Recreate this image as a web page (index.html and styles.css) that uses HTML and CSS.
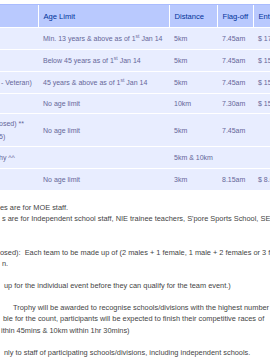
FILE: index.html
```html
<!DOCTYPE html>
<html>
<head>
<meta charset="utf-8">
<link rel="stylesheet" href="styles.css">
</head>
<body>
<div class="page">
  <table class="fees">
    <colgroup>
      <col class="c1"><col class="c2"><col class="c3"><col class="c4"><col class="c5">
    </colgroup>
    <thead>
      <tr>
        <th></th>
        <th>Age Limit</th>
        <th>Distance</th>
        <th>Flag-off</th>
        <th>Entry Fee</th>
      </tr>
    </thead>
    <tbody>
      <tr class="r1">
        <td></td>
        <td>Min. 13 years &amp; above as of 1<sup>st</sup> Jan 14</td>
        <td>5km</td>
        <td>7.45am</td>
        <td>$ 17.00</td>
      </tr>
      <tr class="r2">
        <td></td>
        <td>Below 45 years as of 1<sup>st</sup> Jan 14</td>
        <td>5km</td>
        <td>7.45am</td>
        <td>$ 15.00</td>
      </tr>
      <tr class="r3">
        <td><span class="frag f3">- Veteran)</span></td>
        <td>45 years &amp; above as of 1<sup>st</sup> Jan 14</td>
        <td>5km</td>
        <td>7.45am</td>
        <td>$ 15.00</td>
      </tr>
      <tr class="r4">
        <td></td>
        <td>No age limit</td>
        <td>10km</td>
        <td>7.30am</td>
        <td>$ 15.00</td>
      </tr>
      <tr class="r5">
        <td><span class="frag f5">osed) **<br>5)</span></td>
        <td>No age limit</td>
        <td>5km</td>
        <td>7.45am</td>
        <td></td>
      </tr>
      <tr class="r6">
        <td><span class="frag f6">hy ^^</span></td>
        <td></td>
        <td>5km &amp; 10km</td>
        <td></td>
        <td></td>
      </tr>
      <tr class="r7">
        <td></td>
        <td>No age limit</td>
        <td>3km</td>
        <td>8.15am</td>
        <td>$ 8.00</td>
      </tr>
    </tbody>
  </table>

  <div class="notes">
    <p class="l0">es are for MOE staff.</p>
    <p class="l1">s are for Independent school staff, NIE trainee teachers, S'pore Sports School, SEAB staff.</p>
    <p class="blank">&nbsp;</p>
    <p class="blank">&nbsp;</p>
    <p class="l4">osed):&nbsp; Each team to be made up of (2 males + 1 female, 1 male + 2 females or 3 females)</p>
    <p class="l5">n.</p>
    <p class="blank">&nbsp;</p>
    <p class="l7">up for the individual event before they can qualify for the team event.)</p>
    <p class="blank">&nbsp;</p>
    <p class="l9">Trophy will be awarded to recognise schools/divisions with the highest number</p>
    <p class="l10">ble for the count, participants will be expected to finish their competitive races of</p>
    <p class="l11">ithin 45mins &amp; 10km within 1hr 30mins)</p>
    <p class="blank">&nbsp;</p>
    <p class="l13">nly to staff of participating schools/divisions, including independent schools.</p>
  </div>
</div>
</body>
</html>
```
FILE: styles.css
```css
html, body {
  margin: 0;
  padding: 0;
  background: #ffffff;
}
body {
  width: 270px;
  height: 360px;
  overflow: hidden;
  font-family: "Liberation Sans", Arial, sans-serif;
}
.page {
  padding-top: 4px;
}
.fees {
  border-collapse: collapse;
  table-layout: fixed;
  width: 323px;
  text-align: left;
}
.c1 { width: 38px; }
.c2 { width: 131px; }
.c3 { width: 48px; }
.c4 { width: 36px; }
.c5 { width: 70px; }

.fees th {
  font-weight: normal;
  font-size: 7.6px;
  color: #003399;
  background: #b9c9fe;
  border-top: 1px solid #aabcfe;
  border-left: 1px solid #ffffff;
  border-bottom: 1px solid #ffffff;
  height: 22px;
  padding: 0 0 0 5px;
  white-space: nowrap;
  overflow: hidden;
}
.fees th:first-child { border-left: none; }
.fees td {
  font-size: 7px;
  color: #666699;
  background: #e8edff;
  border-bottom: 1px solid #ffffff;
  padding: 0 0 0 5px;
  height: 21px;
  white-space: nowrap;
  overflow: hidden;
  vertical-align: middle;
}
.fees td:first-child { padding-left: 0; }
.fees .r5 td { height: 32px; }
.fees .r4 td { height: 19px; }
.fees sup {
  font-size: 5px;
  line-height: 0;
  vertical-align: 3px;
}
.frag {
  display: block;
  line-height: 13px;
}
.f3 { margin-left: 1px; }
.f5 { margin-left: -1px; }
.f6 { margin-left: -1px; }

.notes {
  margin-top: 11px;
  font-size: 7.4px;
  color: #444444;
  line-height: 11.15px;
  white-space: nowrap;
}
.notes p {
  margin: 0;
  height: 11.15px;
}
.l0 { padding-left: 0; }
.l1 { padding-left: 2px; }
.l4 { padding-left: 0; }
.l5 { padding-left: 2px; }
.l7 { padding-left: 4px; }
.l9 { padding-left: 13px; }
.l10 { padding-left: 3px; }
.l11 { padding-left: 1px; }
.l13 { padding-left: 4px; }
```
